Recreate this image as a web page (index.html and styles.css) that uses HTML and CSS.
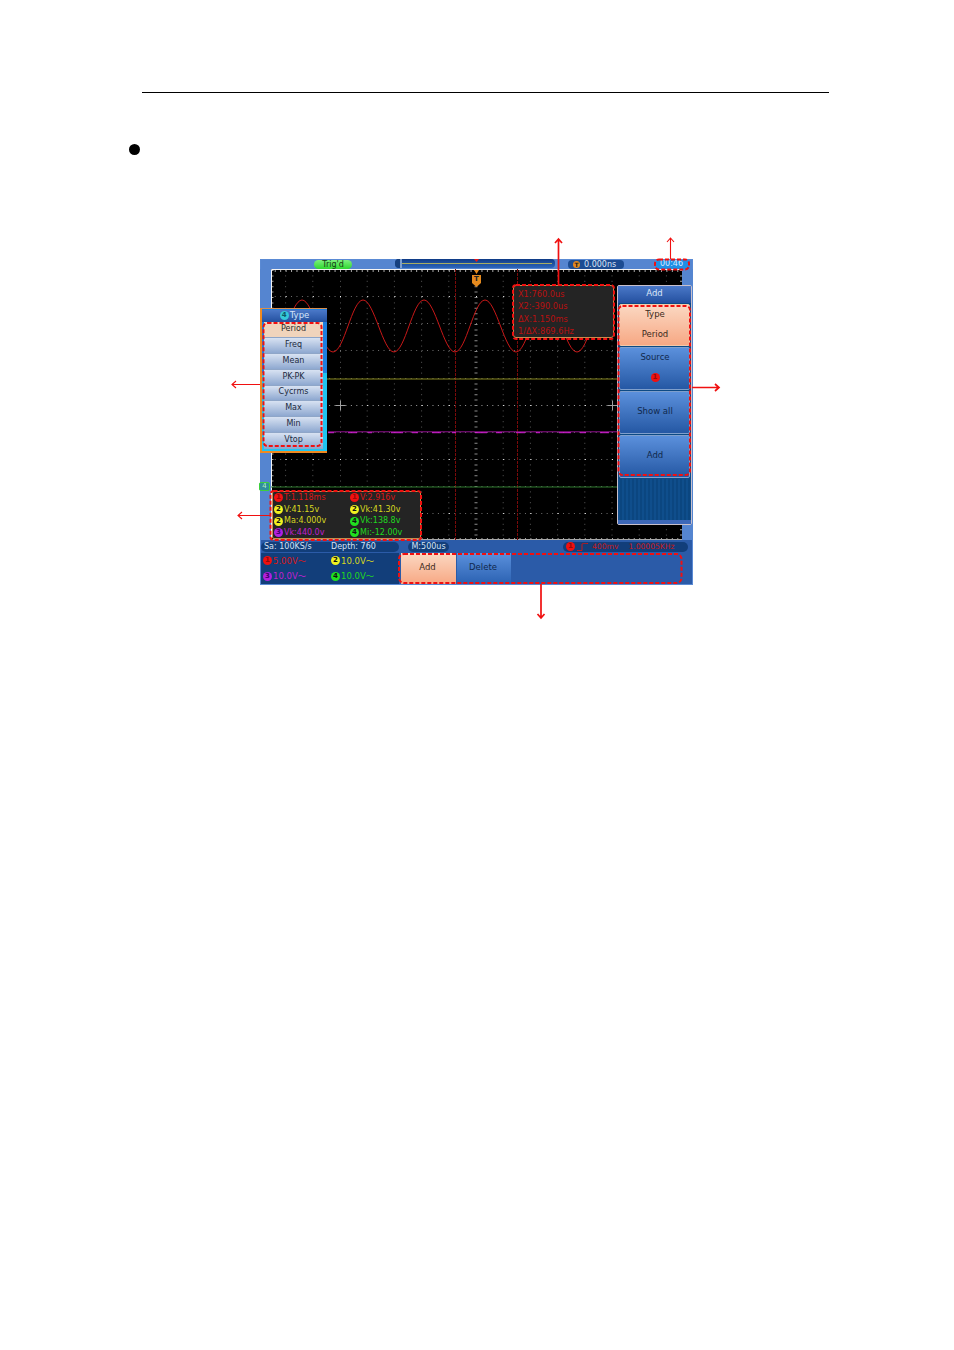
FILE: index.html
```html
<!DOCTYPE html>
<html lang="en">
<head>
<meta charset="utf-8">
<title>Oscilloscope measure screen</title>
<link rel="stylesheet" href="styles.css">
</head>
<body>
<main class="page">
  <hr class="rule">
  <span class="bullet"></span>
  <section class="scope">
    <div class="topbar">
      <span class="trig">Trig'd</span>
      <span class="track"><i class="track-cap"></i><i class="track-line"></i><i class="track-mark"></i></span>
      <span class="tpill"><b class="t-icon">T</b>0.000ns</span>
      <span class="clock">00:46</span>
    </div>
    <div class="middle">
      <svg class="grat" viewBox="271 269 411 271" aria-hidden="true">
        <rect x="271" y="269" width="411" height="271" fill="#000"/>
        <path class="dots-v" d="M285.600 270V540M312.800 270V540M340.500 270V540M367.200 270V540M394.400 270V540M421.600 270V540M448.800 270V540M503.200 270V540M530.400 270V540M557.600 270V540M584.800 270V540M612 270V540M639.200 270V540M666.400 270V540"/>
        <path class="dots-h" d="M271 296.500H682M271 323.500H682M271 350.500H682M271 378.500H682M271 432.500H682M271 459.500H682M271 486.500H682M271 513.500H682"/>
        <path class="dots-h mid" d="M271 405.500H682"/>
        <path class="dots-x" d="M271 296.500H682M271 405.500H682M271 459.500H682M271 513.500H682"/>
        <path class="dots-c" d="M476 270V540"/>
        <path class="ticks-h" d="M271 271H682M271 539H682"/>
        <path class="ticks-v" d="M272.500 270V540M681 270V540"/>
        <path class="frame" d="M271.500 540V269.500H682"/>
        <path class="frame-b" d="M271 539.500H682"/>
        <path class="cursor-v" d="M455.500 269V540M517.500 269V540"/>
        <path class="line-y" d="M271 379H682"/>
        <path class="line-m" d="M328 431.800H682"/>
        <path class="line-m2" d="M328 432.700H682"/>
        <path class="line-g" d="M271 487H682"/>
        <path class="cross" d="M335.500 405.500H345.500M340.500 400.500V410.500M607.500 405.500H617M612.500 400.500V410.500"/>
        <path class="sine" d="M271 352C282 352 291 300 302 300S321.900 352 333 352S351.900 300 363 300S382.900 352 394 352S412.900 300 424 300S443.900 352 455 352S473.900 300 485 300S504.900 352 516 352S534.900 300 546 300S565.900 352 577 352S595.900 300 607 300"/>
        <path class="t-flag" d="M474 270h5l-2.500 4z"/>
        <path class="t-flag" d="M472 275h9v8l-4.500 4l-4.500-4z"/>
      </svg>
      <span class="grat-t">T</span>
      <span class="ch4-flag">4</span>

      <div class="cursor-box">
        <span>X1:760.0us</span>
        <span>X2:-390.0us</span>
        <span>ΔX:1.150ms</span>
        <span>1/ΔX:869.6Hz</span>
      </div>

      <div class="meas">
        <span class="m red"><b class="ch c1">1</b>T:1.118ms</span>
        <span class="m red"><b class="ch c1">1</b>V:2.916v</span>
        <span class="m yel"><b class="ch c2">2</b>V:41.15v</span>
        <span class="m yel"><b class="ch c2">2</b>Vk:41.30v</span>
        <span class="m yel"><b class="ch c2">2</b>Ma:4.000v</span>
        <span class="m grn"><b class="ch c4">4</b>Vk:138.8v</span>
        <span class="m mag"><b class="ch c3">3</b>Vk:440.0v</span>
        <span class="m grn"><b class="ch c4">4</b>Mi:-12.00v</span>
      </div>

      <aside class="type-menu">
        <div class="type-title"><b class="ch ctype">4</b>Type</div>
        <ul class="type-list">
          <li class="sel">Period</li>
          <li>Freq</li>
          <li>Mean</li>
          <li>PK-PK</li>
          <li>Cycrms</li>
          <li>Max</li>
          <li>Min</li>
          <li>Vtop</li>
        </ul>
      </aside>

      <aside class="side">
        <div class="side-title">Add</div>
        <div class="sbtn peach"><span>Type</span><span>Period</span></div>
        <div class="sbtn"><span>Source</span><b class="ch c1 src">1</b></div>
        <div class="sbtn single"><span>Show all</span></div>
        <div class="sbtn single"><span>Add</span></div>
        <div class="stripes"></div>
      </aside>
    </div>
    <div class="status">
      <span class="sa"><span>Sa: 100KS/s</span><span>Depth: 760</span></span>
      <span class="mpill">M:500us</span>
      <span class="trigpill"><b class="ch c1">1</b>
        <svg class="edge" viewBox="0 0 11 8" aria-hidden="true"><path d="M0 7.500H5V1C5 .5 7 .5 11 .5"/></svg>
        <span>400mv</span><span>1.00005KHz</span></span>
    </div>
    <div class="bottom">
      <div class="chan">
        <span class="c red"><b class="ch c1">1</b>5.00V～</span>
        <span class="c yel"><b class="ch c2">2</b>10.0V～</span>
        <span class="c mag"><b class="ch c3">3</b>10.0V～</span>
        <span class="c grn"><b class="ch c4">4</b>10.0V～</span>
      </div>
      <div class="tab peach-tab">Add</div>
      <div class="tab">Delete</div>
    </div>
    <svg class="notes" viewBox="260 259 433 326" aria-hidden="true">
      <g class="dash">
        <rect x="263.500" y="323" width="58" height="123" rx="4"/>
        <rect x="270.500" y="491" width="150.500" height="49" rx="3"/>
        <rect x="513" y="285" width="101" height="54" rx="3"/>
        <rect x="618.500" y="306" width="71.500" height="169" rx="4"/>
        <rect x="655" y="259.500" width="34" height="10" rx="4"/>
        <rect x="399" y="554" width="282.500" height="29" rx="5"/>
      </g>
      <g class="arrows">
        <path class="thick" d="M558.500 285V239M555 243L558.500 239L562 243"/>
        <path d="M670.500 259V238M667 242L670.500 238L674 242"/>
        <path d="M260 384.500H232M236 381L232 384.500L236 388"/>
        <path class="thick" d="M692 387.500H719M715 384L719 387.500L715 391"/>
        <path d="M270 515.500H238M242 512L238 515.500L242 519"/>
        <path class="thick" d="M541 584V618M537.500 614L541 618L544.500 614"/>
      </g>
    </svg>
  </section>
</main>
</body>
</html>
```
FILE: styles.css
```css
* { box-sizing: border-box; }
html, body { margin: 0; padding: 0; background: #fff; }
body { width: 954px; height: 1350px; overflow: hidden; font-family: "DejaVu Sans", "Noto Sans CJK SC", sans-serif; }
.page { padding: 92px 0 0 142px; }
.rule { width: 687px; height: 1px; margin: 0; border: 0; background: #000; }
.bullet { display: block; width: 11px; height: 11px; margin: 51px 0 0 -13px; border-radius: 50%; background: #000; }

.scope { position: relative; display: flex; flex-direction: column; width: 433px; height: 326px; margin: 104px 0 0 118px; outline: 1px solid #5a8ad4; outline-offset: -1px; background: #2b5ba8; font-size: 8px; line-height: 1; color: #d5e2f5; filter: blur(.3px); }

.topbar { display: flex; align-items: flex-start; flex: none; height: 10px; background: #5585d0; }
.trig { width: 38px; height: 9px; margin: 1px 0 0 54px; border-radius: 5px; background: linear-gradient(#7cf07c, #2fd82f); color: #143c14; text-align: center; line-height: 9px; }
.track { position: relative; display: flex; align-items: center; width: 160px; height: 9px; margin-left: 43px; border-radius: 4px; background: linear-gradient(#0f3a85, #2d66bc); }
.track-cap { flex: none; width: 7px; height: 9px; border-radius: 4px 0 0 4px; background: #16407f; border-right: 2px solid #7d9fd0; }
.track-line { display: block; flex: 1; height: 1px; margin-right: 3px; background: #a8ad62; }
.track-mark { position: absolute; left: 79px; top: 0; width: 5px; height: 3px; background: #e81818; clip-path: polygon(0 0, 100% 0, 50% 100%); }
.tpill { display: flex; align-items: center; width: 56px; height: 9px; margin: 1px 0 0 13px; padding-left: 5px; border-radius: 4px; background: #1c4c92; color: #dce6f5; }
.t-icon { display: block; flex: none; width: 7px; height: 7px; margin-right: 4px; border-radius: 50%; background: #e58a1e; color: #222; font-size: 6px; font-weight: 700; line-height: 7px; text-align: center; }
.clock { width: 35px; height: 9px; margin: 1px 0 0 31px; padding-right: 2px; border-radius: 4px; background: #1f8fe6; color: #d7eaff; text-align: center; line-height: 8px; }

.middle { position: relative; flex: none; height: 271px; background: #5585d0; }
.grat { display: block; width: 411px; height: 271px; margin-left: 11px; }
.dots-v { fill: none; stroke: #585858; stroke-dasharray: 1 4.400; }
.dots-h { fill: none; stroke: #707070; stroke-dasharray: 1 4.440; stroke-dashoffset: 1.720; }
.dots-h.mid { stroke: #a0a0a0; }
.dots-x { fill: none; stroke: #f0f0f0; stroke-dasharray: 1 26.200; stroke-dashoffset: 12.600; }
.dots-c { fill: none; stroke: #8a8a8a; stroke-width: 3; stroke-dasharray: 1 4.400; }
.ticks-h { fill: none; stroke: #a8a8a8; stroke-width: 2; stroke-dasharray: 1 4.440; stroke-dashoffset: 1.720; }
.ticks-v { fill: none; stroke: #a8a8a8; stroke-width: 2; stroke-dasharray: 1 4.400; }
.frame { fill: none; stroke: #f4f4f4; }
.frame-b { fill: none; stroke: #a8a8a8; }
.cursor-v { fill: none; stroke: #7a0a0a; stroke-dasharray: 3 1; }
.line-y { stroke: #85851c; }
.line-m { stroke: #90108f; }
.line-m2 { stroke: #d820d8; stroke-width: 1; stroke-dasharray: 6 14 9 11 4 19 12 9; }
.line-g { stroke: #2f7a2f; }
.cross { fill: none; stroke: #a0a0a0; }
.sine { fill: none; stroke: #c81818; }
.t-flag { fill: #e58a1e; }
.grat-t { position: absolute; left: 213px; top: 7px; width: 7px; color: #222; font-size: 7px; font-weight: 700; text-align: center; }
.ch4-flag { position: absolute; left: -1px; top: 213px; width: 11px; height: 9px; border: 1px solid #3ccf3c; border-radius: 2px; background: #2f8f9f; color: #b8f0b8; font-size: 7px; line-height: 7px; text-align: center; }

.cursor-box { position: absolute; left: 253px; top: 16px; display: flex; flex-direction: column; justify-content: space-between; width: 101px; height: 53px; padding: 4px 0 2px 4px; border: 1px solid #c98a4a; border-radius: 3px; background: #242424; color: #b81010; font-size: 8.200px; }

.meas { position: absolute; left: 12px; top: 222px; display: grid; grid-template-columns: 76px 1fr; grid-auto-rows: 11.700px; align-items: center; width: 149px; height: 48px; padding-left: 2px; border: 1px solid #c98a4a; border-radius: 2px; background: #242424; font-size: 8px; }
.m { display: flex; align-items: center; white-space: nowrap; }
.red { color: #d81818; }
.yel { color: #d8d820; }
.grn { color: #20d820; }
.mag { color: #c020d0; }
.ch { display: inline-block; flex: none; width: 9px; height: 9px; margin-right: 1px; border-radius: 50%; color: #111; font-size: 7px; font-weight: 700; line-height: 9px; text-align: center; }
.m .ch { margin-left: -1px; }
.c1 { background: #f01010; color: #980808; }
.c2 { background: #f0f020; }
.c3 { background: #b020e0; color: #40006a; }
.c4 { background: #20e020; }
.ctype { background: #35c8d8; color: #0b5a66; }

.type-menu { position: absolute; left: 0; top: 39px; display: flex; flex-direction: column; width: 67px; height: 145px; padding: 1px 0 1px 2px; border-top: 1px solid #d89050; border-left: 2px solid #f08a20; border-bottom: 2px solid #f08a20; background: linear-gradient(#1e7ee0 0, #1e7ee0 45%, #20c4f0 45%, #20c4f0 100%); }
.type-title { display: flex; align-items: center; justify-content: center; flex: none; height: 12px; margin-left: -2px; padding-bottom: 1px; background: linear-gradient(#4a78c8, #24509f); color: #d6e4f8; font-size: 8.500px; }
.type-list { display: flex; flex-direction: column; flex: 1; margin: 0 4px 0 0; padding: 0 0 1px; list-style: none; }
.type-list li { display: flex; flex: 1; align-items: center; justify-content: center; padding-bottom: 1px; border-bottom: 1px solid #8fa6c8; background: linear-gradient(#d8e2f2, #8ea8d0); color: #1c2a40; font-size: 8px; }
.type-list li.sel { background: #f0d4bc; color: #2a2a2a; }

.side { position: absolute; left: 357px; top: 16px; display: flex; flex-direction: column; width: 75px; height: 240px; padding: 0 1px; border: 1px solid #c8c0cc; border-radius: 2px; background: #0d4a85; }
.side-title { flex: none; height: 17px; margin: 0 -1px 1px; background: linear-gradient(#4a78c8, #24509f); color: #dbe6f8; font-size: 8.500px; line-height: 15px; text-align: center; }
.sbtn { display: flex; flex-direction: column; align-items: center; justify-content: space-between; flex: none; height: 43px; padding: 5px 0 7px 1px; border: 1px solid #7f9fcc; border-radius: 2px; background: linear-gradient(#5b90dc, #2558a4); color: #10284c; font-size: 8.500px; }
.sbtn.peach { height: 42px; margin-bottom: 1px; border-color: #f4c8a8; background: linear-gradient(#fbd8c2, #f7a884); color: #3a2a20; }
.sbtn.single { justify-content: center; margin-top: 1px; padding: 0 0 2px 1px; }
.src { margin: 0; }
.stripes { flex: 1; margin: 1px -1px 0; border-bottom: 4px solid #3d68b8; background: repeating-linear-gradient(90deg, #0f4e8c 0, #0f4e8c 2px, #0b4680 2px, #0b4680 4px); }

.status { display: flex; align-items: center; flex: none; height: 13px; padding: 1px 0 1px 1px; background: #2b5ba8; }
.sa { display: flex; flex: none; width: 138px; height: 10px; padding-left: 3px; border-radius: 5px; background: #123e7a; line-height: 10px; }
.sa span:first-child { width: 67px; }
.mpill { flex: none; width: 41px; height: 10px; margin-left: 9px; border-radius: 5px; background: #123e7a; line-height: 10px; text-align: center; }
.trigpill { display: flex; align-items: center; flex: none; width: 125px; height: 10px; margin-left: 114px; padding-left: 3px; border-radius: 5px; background: #123e7a; color: #c81818; font-size: 7.600px; }
.trigpill span { margin-right: 10px; }
.edge { flex: none; width: 11px; height: 8px; margin: 0 4px 0 1px; fill: none; stroke: #c81818; }

.bottom { display: flex; flex: 1; gap: 1px; padding: 0 0 1px 1px; }
.chan { display: grid; grid-template-columns: 68px 1fr; align-content: space-around; flex: none; width: 138px; margin-right: 1px; padding-left: 2px; background: #123e7a; font-size: 8.500px; }
.c { display: flex; align-items: center; white-space: nowrap; }
.tab { display: flex; align-items: center; justify-content: center; width: 54px; padding: 0 2px 2px 0; background: linear-gradient(#5b90dc, #2b62b2); color: #10284c; font-size: 8.500px; }
.peach-tab { width: 55px; background: linear-gradient(#fbd8c2, #f7a884); color: #3a2a20; }

.notes { position: absolute; left: 0; top: 0; width: 433px; height: 326px; overflow: visible; }
.dash rect { fill: none; stroke: #f01010; stroke-width: 2; stroke-dasharray: 4 2; }
.arrows path { fill: none; stroke: #f01010; stroke-width: 1.100; }
.arrows path.thick { stroke-width: 1.700; }
```
